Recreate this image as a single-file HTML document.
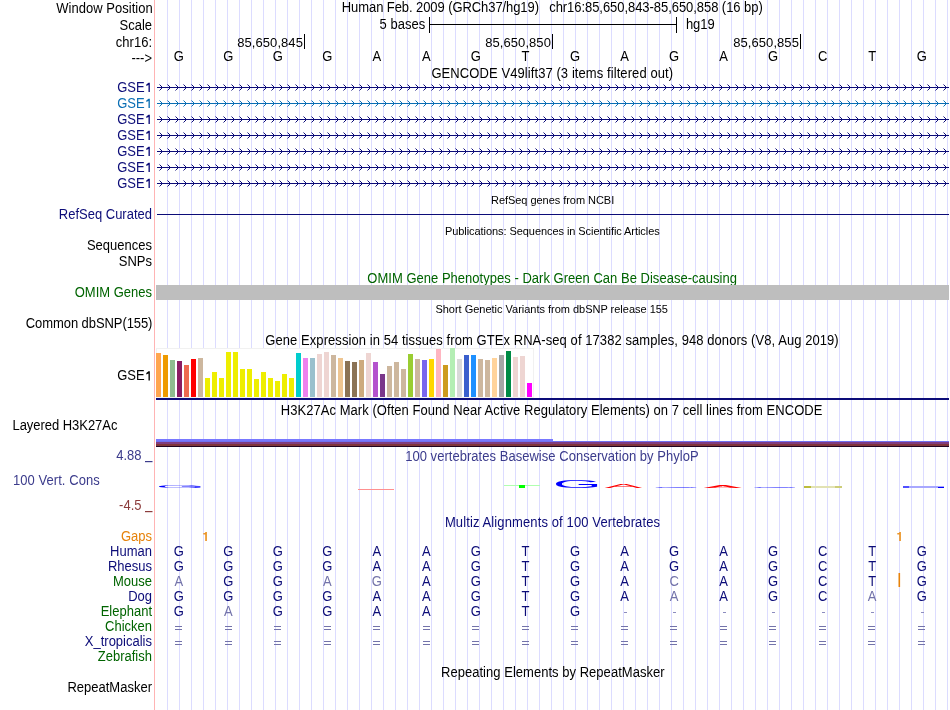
<!DOCTYPE html><html><head><meta charset="utf-8"><style>html,body{margin:0;padding:0;background:#fff;width:950px;height:710px;overflow:hidden}svg{display:block;font-size:13px;will-change:transform}text{font-family:"Liberation Sans",sans-serif}</style></head><body>
<svg width="950" height="710" viewBox="0 0 950 710" shape-rendering="crispEdges">
<path d="M167.5 0V710 M179.5 0V710 M191.5 0V710 M203.5 0V710 M215.5 0V710 M227.5 0V710 M239.5 0V710 M251.5 0V710 M263.5 0V710 M275.5 0V710 M287.5 0V710 M299.5 0V710 M311.5 0V710 M323.5 0V710 M335.5 0V710 M347.5 0V710 M359.5 0V710 M371.5 0V710 M383.5 0V710 M395.5 0V710 M407.5 0V710 M419.5 0V710 M431.5 0V710 M443.5 0V710 M455.5 0V710 M467.5 0V710 M479.5 0V710 M491.5 0V710 M503.5 0V710 M515.5 0V710 M527.5 0V710 M539.5 0V710 M551.5 0V710 M563.5 0V710 M575.5 0V710 M587.5 0V710 M599.5 0V710 M611.5 0V710 M623.5 0V710 M635.5 0V710 M647.5 0V710 M659.5 0V710 M671.5 0V710 M683.5 0V710 M695.5 0V710 M707.5 0V710 M719.5 0V710 M731.5 0V710 M743.5 0V710 M755.5 0V710 M767.5 0V710 M779.5 0V710 M791.5 0V710 M803.5 0V710 M815.5 0V710 M827.5 0V710 M839.5 0V710 M851.5 0V710 M863.5 0V710 M875.5 0V710 M887.5 0V710 M899.5 0V710 M911.5 0V710 M923.5 0V710 M935.5 0V710 M947.5 0V710" stroke="#dcdcff" stroke-width="1"/>
<rect x="154" y="0" width="1" height="710" fill="#ffb4b4"/>
<text x="56.3" y="13" fill="#000" text-anchor="start" font-size="13" textLength="96.39" lengthAdjust="spacing" transform="matrix(1 0 0 1.055 0 -0.715)">Window Position</text>
<text x="152" y="30" fill="#000" text-anchor="end" font-size="13" transform="matrix(1 0 0 1.055 0 -1.650)">Scale</text>
<text x="152" y="47" fill="#000" text-anchor="end" font-size="13" transform="matrix(1 0 0 1.055 0 -2.585)">chr16:</text>
<text x="152" y="63" fill="#000" text-anchor="end" font-size="13" transform="matrix(1 0 0 1.055 0 -3.465)">---&gt;</text>
<text x="341.8" y="12.5" fill="#000" text-anchor="start" font-size="13" textLength="197.21" lengthAdjust="spacing" transform="matrix(1 0 0 1.055 0 -0.687)">Human Feb. 2009 (GRCh37/hg19)</text>
<text x="549.2" y="12.5" fill="#000" text-anchor="start" font-size="13" textLength="213.54" lengthAdjust="spacing" transform="matrix(1 0 0 1.055 0 -0.687)">chr16:85,650,843-85,650,858 (16 bp)</text>
<text x="379.5" y="29" fill="#000" text-anchor="start" font-size="13" textLength="45.73" lengthAdjust="spacing" transform="matrix(1 0 0 1.055 0 -1.595)">5 bases</text>
<text x="685.9" y="29" fill="#000" text-anchor="start" font-size="13" textLength="28.83" lengthAdjust="spacing" transform="matrix(1 0 0 1.055 0 -1.595)">hg19</text>
<path d="M429.5 17V33M676.5 17V33M429 24.5H677" stroke="#000" stroke-width="1" fill="none"/>
<text x="237.3" y="47" fill="#000" text-anchor="start" font-size="13" textLength="65.56" lengthAdjust="spacing">85,650,845</text>
<rect x="304" y="34" width="1" height="15" fill="#000"/>
<text x="485.3" y="47" fill="#000" text-anchor="start" font-size="13" textLength="65.56" lengthAdjust="spacing">85,650,850</text>
<rect x="552" y="34" width="1" height="15" fill="#000"/>
<text x="733.3" y="47" fill="#000" text-anchor="start" font-size="13" textLength="65.56" lengthAdjust="spacing">85,650,855</text>
<rect x="800" y="34" width="1" height="15" fill="#000"/>
<text x="178.8" y="61" fill="#000" text-anchor="middle" font-size="13" transform="matrix(1 0 0 1.055 0 -3.355)">G</text>
<text x="228.3" y="61" fill="#000" text-anchor="middle" font-size="13" transform="matrix(1 0 0 1.055 0 -3.355)">G</text>
<text x="277.8" y="61" fill="#000" text-anchor="middle" font-size="13" transform="matrix(1 0 0 1.055 0 -3.355)">G</text>
<text x="327.4" y="61" fill="#000" text-anchor="middle" font-size="13" transform="matrix(1 0 0 1.055 0 -3.355)">G</text>
<text x="376.9" y="61" fill="#000" text-anchor="middle" font-size="13" transform="matrix(1 0 0 1.055 0 -3.355)">A</text>
<text x="426.4" y="61" fill="#000" text-anchor="middle" font-size="13" transform="matrix(1 0 0 1.055 0 -3.355)">A</text>
<text x="475.9" y="61" fill="#000" text-anchor="middle" font-size="13" transform="matrix(1 0 0 1.055 0 -3.355)">G</text>
<text x="525.5" y="61" fill="#000" text-anchor="middle" font-size="13" transform="matrix(1 0 0 1.055 0 -3.355)">T</text>
<text x="575.0" y="61" fill="#000" text-anchor="middle" font-size="13" transform="matrix(1 0 0 1.055 0 -3.355)">G</text>
<text x="624.5" y="61" fill="#000" text-anchor="middle" font-size="13" transform="matrix(1 0 0 1.055 0 -3.355)">A</text>
<text x="674.1" y="61" fill="#000" text-anchor="middle" font-size="13" transform="matrix(1 0 0 1.055 0 -3.355)">G</text>
<text x="723.6" y="61" fill="#000" text-anchor="middle" font-size="13" transform="matrix(1 0 0 1.055 0 -3.355)">A</text>
<text x="773.1" y="61" fill="#000" text-anchor="middle" font-size="13" transform="matrix(1 0 0 1.055 0 -3.355)">G</text>
<text x="822.7" y="61" fill="#000" text-anchor="middle" font-size="13" transform="matrix(1 0 0 1.055 0 -3.355)">C</text>
<text x="872.2" y="61" fill="#000" text-anchor="middle" font-size="13" transform="matrix(1 0 0 1.055 0 -3.355)">T</text>
<text x="921.7" y="61" fill="#000" text-anchor="middle" font-size="13" transform="matrix(1 0 0 1.055 0 -3.355)">G</text>
<text x="431.4" y="78" fill="#000" text-anchor="start" font-size="13" textLength="241.67" lengthAdjust="spacing" transform="matrix(1 0 0 1.055 0 -4.290)">GENCODE V49lift37 (3 items filtered out)</text>
<text x="144.6" y="92" fill="#0c0c78" text-anchor="end" font-size="13" transform="matrix(1 0 0 1.055 0 -5.060)">GSE</text>
<path d="M148.5 82.7h1.35v9.3h-1.35v-6.9l-2.2 0.8v-1.3z" fill="#0c0c78" shape-rendering="auto"/>
<path d="M157 87.5H949" stroke="#0c0c78" stroke-width="1" fill="none"/>
<path d="M159 84L162 87L159 90 M167 84L170 87L167 90 M175 84L178 87L175 90 M183 84L186 87L183 90 M191 84L194 87L191 90 M199 84L202 87L199 90 M207 84L210 87L207 90 M215 84L218 87L215 90 M223 84L226 87L223 90 M231 84L234 87L231 90 M239 84L242 87L239 90 M247 84L250 87L247 90 M255 84L258 87L255 90 M263 84L266 87L263 90 M271 84L274 87L271 90 M279 84L282 87L279 90 M287 84L290 87L287 90 M295 84L298 87L295 90 M303 84L306 87L303 90 M311 84L314 87L311 90 M319 84L322 87L319 90 M327 84L330 87L327 90 M335 84L338 87L335 90 M343 84L346 87L343 90 M351 84L354 87L351 90 M359 84L362 87L359 90 M367 84L370 87L367 90 M375 84L378 87L375 90 M383 84L386 87L383 90 M391 84L394 87L391 90 M399 84L402 87L399 90 M407 84L410 87L407 90 M415 84L418 87L415 90 M423 84L426 87L423 90 M431 84L434 87L431 90 M439 84L442 87L439 90 M447 84L450 87L447 90 M455 84L458 87L455 90 M463 84L466 87L463 90 M471 84L474 87L471 90 M479 84L482 87L479 90 M487 84L490 87L487 90 M495 84L498 87L495 90 M503 84L506 87L503 90 M511 84L514 87L511 90 M519 84L522 87L519 90 M527 84L530 87L527 90 M535 84L538 87L535 90 M543 84L546 87L543 90 M551 84L554 87L551 90 M559 84L562 87L559 90 M567 84L570 87L567 90 M575 84L578 87L575 90 M583 84L586 87L583 90 M591 84L594 87L591 90 M599 84L602 87L599 90 M607 84L610 87L607 90 M615 84L618 87L615 90 M623 84L626 87L623 90 M631 84L634 87L631 90 M639 84L642 87L639 90 M647 84L650 87L647 90 M655 84L658 87L655 90 M663 84L666 87L663 90 M671 84L674 87L671 90 M679 84L682 87L679 90 M687 84L690 87L687 90 M695 84L698 87L695 90 M703 84L706 87L703 90 M711 84L714 87L711 90 M719 84L722 87L719 90 M727 84L730 87L727 90 M735 84L738 87L735 90 M743 84L746 87L743 90 M751 84L754 87L751 90 M759 84L762 87L759 90 M767 84L770 87L767 90 M775 84L778 87L775 90 M783 84L786 87L783 90 M791 84L794 87L791 90 M799 84L802 87L799 90 M807 84L810 87L807 90 M815 84L818 87L815 90 M823 84L826 87L823 90 M831 84L834 87L831 90 M839 84L842 87L839 90 M847 84L850 87L847 90 M855 84L858 87L855 90 M863 84L866 87L863 90 M871 84L874 87L871 90 M879 84L882 87L879 90 M887 84L890 87L887 90 M895 84L898 87L895 90 M903 84L906 87L903 90 M911 84L914 87L911 90 M919 84L922 87L919 90 M927 84L930 87L927 90 M935 84L938 87L935 90 M943 84L946 87L943 90" stroke="#0c0c78" stroke-width="1" fill="none" transform="translate(0.5,0.5)" shape-rendering="auto"/>
<text x="144.6" y="108" fill="#0a6eb4" text-anchor="end" font-size="13" transform="matrix(1 0 0 1.055 0 -5.940)">GSE</text>
<path d="M148.5 98.7h1.35v9.3h-1.35v-6.9l-2.2 0.8v-1.3z" fill="#0a6eb4" shape-rendering="auto"/>
<path d="M157 103.5H949" stroke="#0a6eb4" stroke-width="1" fill="none"/>
<path d="M159 100L162 103L159 106 M167 100L170 103L167 106 M175 100L178 103L175 106 M183 100L186 103L183 106 M191 100L194 103L191 106 M199 100L202 103L199 106 M207 100L210 103L207 106 M215 100L218 103L215 106 M223 100L226 103L223 106 M231 100L234 103L231 106 M239 100L242 103L239 106 M247 100L250 103L247 106 M255 100L258 103L255 106 M263 100L266 103L263 106 M271 100L274 103L271 106 M279 100L282 103L279 106 M287 100L290 103L287 106 M295 100L298 103L295 106 M303 100L306 103L303 106 M311 100L314 103L311 106 M319 100L322 103L319 106 M327 100L330 103L327 106 M335 100L338 103L335 106 M343 100L346 103L343 106 M351 100L354 103L351 106 M359 100L362 103L359 106 M367 100L370 103L367 106 M375 100L378 103L375 106 M383 100L386 103L383 106 M391 100L394 103L391 106 M399 100L402 103L399 106 M407 100L410 103L407 106 M415 100L418 103L415 106 M423 100L426 103L423 106 M431 100L434 103L431 106 M439 100L442 103L439 106 M447 100L450 103L447 106 M455 100L458 103L455 106 M463 100L466 103L463 106 M471 100L474 103L471 106 M479 100L482 103L479 106 M487 100L490 103L487 106 M495 100L498 103L495 106 M503 100L506 103L503 106 M511 100L514 103L511 106 M519 100L522 103L519 106 M527 100L530 103L527 106 M535 100L538 103L535 106 M543 100L546 103L543 106 M551 100L554 103L551 106 M559 100L562 103L559 106 M567 100L570 103L567 106 M575 100L578 103L575 106 M583 100L586 103L583 106 M591 100L594 103L591 106 M599 100L602 103L599 106 M607 100L610 103L607 106 M615 100L618 103L615 106 M623 100L626 103L623 106 M631 100L634 103L631 106 M639 100L642 103L639 106 M647 100L650 103L647 106 M655 100L658 103L655 106 M663 100L666 103L663 106 M671 100L674 103L671 106 M679 100L682 103L679 106 M687 100L690 103L687 106 M695 100L698 103L695 106 M703 100L706 103L703 106 M711 100L714 103L711 106 M719 100L722 103L719 106 M727 100L730 103L727 106 M735 100L738 103L735 106 M743 100L746 103L743 106 M751 100L754 103L751 106 M759 100L762 103L759 106 M767 100L770 103L767 106 M775 100L778 103L775 106 M783 100L786 103L783 106 M791 100L794 103L791 106 M799 100L802 103L799 106 M807 100L810 103L807 106 M815 100L818 103L815 106 M823 100L826 103L823 106 M831 100L834 103L831 106 M839 100L842 103L839 106 M847 100L850 103L847 106 M855 100L858 103L855 106 M863 100L866 103L863 106 M871 100L874 103L871 106 M879 100L882 103L879 106 M887 100L890 103L887 106 M895 100L898 103L895 106 M903 100L906 103L903 106 M911 100L914 103L911 106 M919 100L922 103L919 106 M927 100L930 103L927 106 M935 100L938 103L935 106 M943 100L946 103L943 106" stroke="#0a6eb4" stroke-width="1" fill="none" transform="translate(0.5,0.5)" shape-rendering="auto"/>
<text x="144.6" y="124" fill="#0c0c78" text-anchor="end" font-size="13" transform="matrix(1 0 0 1.055 0 -6.820)">GSE</text>
<path d="M148.5 114.7h1.35v9.3h-1.35v-6.9l-2.2 0.8v-1.3z" fill="#0c0c78" shape-rendering="auto"/>
<path d="M157 119.5H949" stroke="#0c0c78" stroke-width="1" fill="none"/>
<path d="M159 116L162 119L159 122 M167 116L170 119L167 122 M175 116L178 119L175 122 M183 116L186 119L183 122 M191 116L194 119L191 122 M199 116L202 119L199 122 M207 116L210 119L207 122 M215 116L218 119L215 122 M223 116L226 119L223 122 M231 116L234 119L231 122 M239 116L242 119L239 122 M247 116L250 119L247 122 M255 116L258 119L255 122 M263 116L266 119L263 122 M271 116L274 119L271 122 M279 116L282 119L279 122 M287 116L290 119L287 122 M295 116L298 119L295 122 M303 116L306 119L303 122 M311 116L314 119L311 122 M319 116L322 119L319 122 M327 116L330 119L327 122 M335 116L338 119L335 122 M343 116L346 119L343 122 M351 116L354 119L351 122 M359 116L362 119L359 122 M367 116L370 119L367 122 M375 116L378 119L375 122 M383 116L386 119L383 122 M391 116L394 119L391 122 M399 116L402 119L399 122 M407 116L410 119L407 122 M415 116L418 119L415 122 M423 116L426 119L423 122 M431 116L434 119L431 122 M439 116L442 119L439 122 M447 116L450 119L447 122 M455 116L458 119L455 122 M463 116L466 119L463 122 M471 116L474 119L471 122 M479 116L482 119L479 122 M487 116L490 119L487 122 M495 116L498 119L495 122 M503 116L506 119L503 122 M511 116L514 119L511 122 M519 116L522 119L519 122 M527 116L530 119L527 122 M535 116L538 119L535 122 M543 116L546 119L543 122 M551 116L554 119L551 122 M559 116L562 119L559 122 M567 116L570 119L567 122 M575 116L578 119L575 122 M583 116L586 119L583 122 M591 116L594 119L591 122 M599 116L602 119L599 122 M607 116L610 119L607 122 M615 116L618 119L615 122 M623 116L626 119L623 122 M631 116L634 119L631 122 M639 116L642 119L639 122 M647 116L650 119L647 122 M655 116L658 119L655 122 M663 116L666 119L663 122 M671 116L674 119L671 122 M679 116L682 119L679 122 M687 116L690 119L687 122 M695 116L698 119L695 122 M703 116L706 119L703 122 M711 116L714 119L711 122 M719 116L722 119L719 122 M727 116L730 119L727 122 M735 116L738 119L735 122 M743 116L746 119L743 122 M751 116L754 119L751 122 M759 116L762 119L759 122 M767 116L770 119L767 122 M775 116L778 119L775 122 M783 116L786 119L783 122 M791 116L794 119L791 122 M799 116L802 119L799 122 M807 116L810 119L807 122 M815 116L818 119L815 122 M823 116L826 119L823 122 M831 116L834 119L831 122 M839 116L842 119L839 122 M847 116L850 119L847 122 M855 116L858 119L855 122 M863 116L866 119L863 122 M871 116L874 119L871 122 M879 116L882 119L879 122 M887 116L890 119L887 122 M895 116L898 119L895 122 M903 116L906 119L903 122 M911 116L914 119L911 122 M919 116L922 119L919 122 M927 116L930 119L927 122 M935 116L938 119L935 122 M943 116L946 119L943 122" stroke="#0c0c78" stroke-width="1" fill="none" transform="translate(0.5,0.5)" shape-rendering="auto"/>
<text x="144.6" y="140" fill="#0c0c78" text-anchor="end" font-size="13" transform="matrix(1 0 0 1.055 0 -7.700)">GSE</text>
<path d="M148.5 130.7h1.35v9.3h-1.35v-6.9l-2.2 0.8v-1.3z" fill="#0c0c78" shape-rendering="auto"/>
<path d="M157 135.5H949" stroke="#0c0c78" stroke-width="1" fill="none"/>
<path d="M159 132L162 135L159 138 M167 132L170 135L167 138 M175 132L178 135L175 138 M183 132L186 135L183 138 M191 132L194 135L191 138 M199 132L202 135L199 138 M207 132L210 135L207 138 M215 132L218 135L215 138 M223 132L226 135L223 138 M231 132L234 135L231 138 M239 132L242 135L239 138 M247 132L250 135L247 138 M255 132L258 135L255 138 M263 132L266 135L263 138 M271 132L274 135L271 138 M279 132L282 135L279 138 M287 132L290 135L287 138 M295 132L298 135L295 138 M303 132L306 135L303 138 M311 132L314 135L311 138 M319 132L322 135L319 138 M327 132L330 135L327 138 M335 132L338 135L335 138 M343 132L346 135L343 138 M351 132L354 135L351 138 M359 132L362 135L359 138 M367 132L370 135L367 138 M375 132L378 135L375 138 M383 132L386 135L383 138 M391 132L394 135L391 138 M399 132L402 135L399 138 M407 132L410 135L407 138 M415 132L418 135L415 138 M423 132L426 135L423 138 M431 132L434 135L431 138 M439 132L442 135L439 138 M447 132L450 135L447 138 M455 132L458 135L455 138 M463 132L466 135L463 138 M471 132L474 135L471 138 M479 132L482 135L479 138 M487 132L490 135L487 138 M495 132L498 135L495 138 M503 132L506 135L503 138 M511 132L514 135L511 138 M519 132L522 135L519 138 M527 132L530 135L527 138 M535 132L538 135L535 138 M543 132L546 135L543 138 M551 132L554 135L551 138 M559 132L562 135L559 138 M567 132L570 135L567 138 M575 132L578 135L575 138 M583 132L586 135L583 138 M591 132L594 135L591 138 M599 132L602 135L599 138 M607 132L610 135L607 138 M615 132L618 135L615 138 M623 132L626 135L623 138 M631 132L634 135L631 138 M639 132L642 135L639 138 M647 132L650 135L647 138 M655 132L658 135L655 138 M663 132L666 135L663 138 M671 132L674 135L671 138 M679 132L682 135L679 138 M687 132L690 135L687 138 M695 132L698 135L695 138 M703 132L706 135L703 138 M711 132L714 135L711 138 M719 132L722 135L719 138 M727 132L730 135L727 138 M735 132L738 135L735 138 M743 132L746 135L743 138 M751 132L754 135L751 138 M759 132L762 135L759 138 M767 132L770 135L767 138 M775 132L778 135L775 138 M783 132L786 135L783 138 M791 132L794 135L791 138 M799 132L802 135L799 138 M807 132L810 135L807 138 M815 132L818 135L815 138 M823 132L826 135L823 138 M831 132L834 135L831 138 M839 132L842 135L839 138 M847 132L850 135L847 138 M855 132L858 135L855 138 M863 132L866 135L863 138 M871 132L874 135L871 138 M879 132L882 135L879 138 M887 132L890 135L887 138 M895 132L898 135L895 138 M903 132L906 135L903 138 M911 132L914 135L911 138 M919 132L922 135L919 138 M927 132L930 135L927 138 M935 132L938 135L935 138 M943 132L946 135L943 138" stroke="#0c0c78" stroke-width="1" fill="none" transform="translate(0.5,0.5)" shape-rendering="auto"/>
<text x="144.6" y="156" fill="#0c0c78" text-anchor="end" font-size="13" transform="matrix(1 0 0 1.055 0 -8.580)">GSE</text>
<path d="M148.5 146.7h1.35v9.3h-1.35v-6.9l-2.2 0.8v-1.3z" fill="#0c0c78" shape-rendering="auto"/>
<path d="M157 151.5H949" stroke="#0c0c78" stroke-width="1" fill="none"/>
<path d="M159 148L162 151L159 154 M167 148L170 151L167 154 M175 148L178 151L175 154 M183 148L186 151L183 154 M191 148L194 151L191 154 M199 148L202 151L199 154 M207 148L210 151L207 154 M215 148L218 151L215 154 M223 148L226 151L223 154 M231 148L234 151L231 154 M239 148L242 151L239 154 M247 148L250 151L247 154 M255 148L258 151L255 154 M263 148L266 151L263 154 M271 148L274 151L271 154 M279 148L282 151L279 154 M287 148L290 151L287 154 M295 148L298 151L295 154 M303 148L306 151L303 154 M311 148L314 151L311 154 M319 148L322 151L319 154 M327 148L330 151L327 154 M335 148L338 151L335 154 M343 148L346 151L343 154 M351 148L354 151L351 154 M359 148L362 151L359 154 M367 148L370 151L367 154 M375 148L378 151L375 154 M383 148L386 151L383 154 M391 148L394 151L391 154 M399 148L402 151L399 154 M407 148L410 151L407 154 M415 148L418 151L415 154 M423 148L426 151L423 154 M431 148L434 151L431 154 M439 148L442 151L439 154 M447 148L450 151L447 154 M455 148L458 151L455 154 M463 148L466 151L463 154 M471 148L474 151L471 154 M479 148L482 151L479 154 M487 148L490 151L487 154 M495 148L498 151L495 154 M503 148L506 151L503 154 M511 148L514 151L511 154 M519 148L522 151L519 154 M527 148L530 151L527 154 M535 148L538 151L535 154 M543 148L546 151L543 154 M551 148L554 151L551 154 M559 148L562 151L559 154 M567 148L570 151L567 154 M575 148L578 151L575 154 M583 148L586 151L583 154 M591 148L594 151L591 154 M599 148L602 151L599 154 M607 148L610 151L607 154 M615 148L618 151L615 154 M623 148L626 151L623 154 M631 148L634 151L631 154 M639 148L642 151L639 154 M647 148L650 151L647 154 M655 148L658 151L655 154 M663 148L666 151L663 154 M671 148L674 151L671 154 M679 148L682 151L679 154 M687 148L690 151L687 154 M695 148L698 151L695 154 M703 148L706 151L703 154 M711 148L714 151L711 154 M719 148L722 151L719 154 M727 148L730 151L727 154 M735 148L738 151L735 154 M743 148L746 151L743 154 M751 148L754 151L751 154 M759 148L762 151L759 154 M767 148L770 151L767 154 M775 148L778 151L775 154 M783 148L786 151L783 154 M791 148L794 151L791 154 M799 148L802 151L799 154 M807 148L810 151L807 154 M815 148L818 151L815 154 M823 148L826 151L823 154 M831 148L834 151L831 154 M839 148L842 151L839 154 M847 148L850 151L847 154 M855 148L858 151L855 154 M863 148L866 151L863 154 M871 148L874 151L871 154 M879 148L882 151L879 154 M887 148L890 151L887 154 M895 148L898 151L895 154 M903 148L906 151L903 154 M911 148L914 151L911 154 M919 148L922 151L919 154 M927 148L930 151L927 154 M935 148L938 151L935 154 M943 148L946 151L943 154" stroke="#0c0c78" stroke-width="1" fill="none" transform="translate(0.5,0.5)" shape-rendering="auto"/>
<text x="144.6" y="172" fill="#0c0c78" text-anchor="end" font-size="13" transform="matrix(1 0 0 1.055 0 -9.460)">GSE</text>
<path d="M148.5 162.7h1.35v9.3h-1.35v-6.9l-2.2 0.8v-1.3z" fill="#0c0c78" shape-rendering="auto"/>
<path d="M157 167.5H949" stroke="#0c0c78" stroke-width="1" fill="none"/>
<path d="M159 164L162 167L159 170 M167 164L170 167L167 170 M175 164L178 167L175 170 M183 164L186 167L183 170 M191 164L194 167L191 170 M199 164L202 167L199 170 M207 164L210 167L207 170 M215 164L218 167L215 170 M223 164L226 167L223 170 M231 164L234 167L231 170 M239 164L242 167L239 170 M247 164L250 167L247 170 M255 164L258 167L255 170 M263 164L266 167L263 170 M271 164L274 167L271 170 M279 164L282 167L279 170 M287 164L290 167L287 170 M295 164L298 167L295 170 M303 164L306 167L303 170 M311 164L314 167L311 170 M319 164L322 167L319 170 M327 164L330 167L327 170 M335 164L338 167L335 170 M343 164L346 167L343 170 M351 164L354 167L351 170 M359 164L362 167L359 170 M367 164L370 167L367 170 M375 164L378 167L375 170 M383 164L386 167L383 170 M391 164L394 167L391 170 M399 164L402 167L399 170 M407 164L410 167L407 170 M415 164L418 167L415 170 M423 164L426 167L423 170 M431 164L434 167L431 170 M439 164L442 167L439 170 M447 164L450 167L447 170 M455 164L458 167L455 170 M463 164L466 167L463 170 M471 164L474 167L471 170 M479 164L482 167L479 170 M487 164L490 167L487 170 M495 164L498 167L495 170 M503 164L506 167L503 170 M511 164L514 167L511 170 M519 164L522 167L519 170 M527 164L530 167L527 170 M535 164L538 167L535 170 M543 164L546 167L543 170 M551 164L554 167L551 170 M559 164L562 167L559 170 M567 164L570 167L567 170 M575 164L578 167L575 170 M583 164L586 167L583 170 M591 164L594 167L591 170 M599 164L602 167L599 170 M607 164L610 167L607 170 M615 164L618 167L615 170 M623 164L626 167L623 170 M631 164L634 167L631 170 M639 164L642 167L639 170 M647 164L650 167L647 170 M655 164L658 167L655 170 M663 164L666 167L663 170 M671 164L674 167L671 170 M679 164L682 167L679 170 M687 164L690 167L687 170 M695 164L698 167L695 170 M703 164L706 167L703 170 M711 164L714 167L711 170 M719 164L722 167L719 170 M727 164L730 167L727 170 M735 164L738 167L735 170 M743 164L746 167L743 170 M751 164L754 167L751 170 M759 164L762 167L759 170 M767 164L770 167L767 170 M775 164L778 167L775 170 M783 164L786 167L783 170 M791 164L794 167L791 170 M799 164L802 167L799 170 M807 164L810 167L807 170 M815 164L818 167L815 170 M823 164L826 167L823 170 M831 164L834 167L831 170 M839 164L842 167L839 170 M847 164L850 167L847 170 M855 164L858 167L855 170 M863 164L866 167L863 170 M871 164L874 167L871 170 M879 164L882 167L879 170 M887 164L890 167L887 170 M895 164L898 167L895 170 M903 164L906 167L903 170 M911 164L914 167L911 170 M919 164L922 167L919 170 M927 164L930 167L927 170 M935 164L938 167L935 170 M943 164L946 167L943 170" stroke="#0c0c78" stroke-width="1" fill="none" transform="translate(0.5,0.5)" shape-rendering="auto"/>
<text x="144.6" y="188" fill="#0c0c78" text-anchor="end" font-size="13" transform="matrix(1 0 0 1.055 0 -10.340)">GSE</text>
<path d="M148.5 178.7h1.35v9.3h-1.35v-6.9l-2.2 0.8v-1.3z" fill="#0c0c78" shape-rendering="auto"/>
<path d="M157 183.5H949" stroke="#0c0c78" stroke-width="1" fill="none"/>
<path d="M159 180L162 183L159 186 M167 180L170 183L167 186 M175 180L178 183L175 186 M183 180L186 183L183 186 M191 180L194 183L191 186 M199 180L202 183L199 186 M207 180L210 183L207 186 M215 180L218 183L215 186 M223 180L226 183L223 186 M231 180L234 183L231 186 M239 180L242 183L239 186 M247 180L250 183L247 186 M255 180L258 183L255 186 M263 180L266 183L263 186 M271 180L274 183L271 186 M279 180L282 183L279 186 M287 180L290 183L287 186 M295 180L298 183L295 186 M303 180L306 183L303 186 M311 180L314 183L311 186 M319 180L322 183L319 186 M327 180L330 183L327 186 M335 180L338 183L335 186 M343 180L346 183L343 186 M351 180L354 183L351 186 M359 180L362 183L359 186 M367 180L370 183L367 186 M375 180L378 183L375 186 M383 180L386 183L383 186 M391 180L394 183L391 186 M399 180L402 183L399 186 M407 180L410 183L407 186 M415 180L418 183L415 186 M423 180L426 183L423 186 M431 180L434 183L431 186 M439 180L442 183L439 186 M447 180L450 183L447 186 M455 180L458 183L455 186 M463 180L466 183L463 186 M471 180L474 183L471 186 M479 180L482 183L479 186 M487 180L490 183L487 186 M495 180L498 183L495 186 M503 180L506 183L503 186 M511 180L514 183L511 186 M519 180L522 183L519 186 M527 180L530 183L527 186 M535 180L538 183L535 186 M543 180L546 183L543 186 M551 180L554 183L551 186 M559 180L562 183L559 186 M567 180L570 183L567 186 M575 180L578 183L575 186 M583 180L586 183L583 186 M591 180L594 183L591 186 M599 180L602 183L599 186 M607 180L610 183L607 186 M615 180L618 183L615 186 M623 180L626 183L623 186 M631 180L634 183L631 186 M639 180L642 183L639 186 M647 180L650 183L647 186 M655 180L658 183L655 186 M663 180L666 183L663 186 M671 180L674 183L671 186 M679 180L682 183L679 186 M687 180L690 183L687 186 M695 180L698 183L695 186 M703 180L706 183L703 186 M711 180L714 183L711 186 M719 180L722 183L719 186 M727 180L730 183L727 186 M735 180L738 183L735 186 M743 180L746 183L743 186 M751 180L754 183L751 186 M759 180L762 183L759 186 M767 180L770 183L767 186 M775 180L778 183L775 186 M783 180L786 183L783 186 M791 180L794 183L791 186 M799 180L802 183L799 186 M807 180L810 183L807 186 M815 180L818 183L815 186 M823 180L826 183L823 186 M831 180L834 183L831 186 M839 180L842 183L839 186 M847 180L850 183L847 186 M855 180L858 183L855 186 M863 180L866 183L863 186 M871 180L874 183L871 186 M879 180L882 183L879 186 M887 180L890 183L887 186 M895 180L898 183L895 186 M903 180L906 183L903 186 M911 180L914 183L911 186 M919 180L922 183L919 186 M927 180L930 183L927 186 M935 180L938 183L935 186 M943 180L946 183L943 186" stroke="#0c0c78" stroke-width="1" fill="none" transform="translate(0.5,0.5)" shape-rendering="auto"/>
<text x="491.0" y="204" fill="#000" text-anchor="start" font-size="11" textLength="123.23" lengthAdjust="spacing">RefSeq genes from NCBI</text>
<text x="152" y="219" fill="#0c0c78" text-anchor="end" font-size="13" transform="matrix(1 0 0 1.055 0 -12.045)">RefSeq Curated</text>
<rect x="157" y="214" width="792" height="1" fill="#0c0c78"/>
<text x="444.9" y="235" fill="#000" text-anchor="start" font-size="11" textLength="214.82" lengthAdjust="spacing">Publications: Sequences in Scientific Articles</text>
<text x="152" y="250" fill="#000" text-anchor="end" font-size="13" transform="matrix(1 0 0 1.055 0 -13.750)">Sequences</text>
<text x="152" y="266" fill="#000" text-anchor="end" font-size="13" transform="matrix(1 0 0 1.055 0 -14.630)">SNPs</text>
<text x="367.3" y="283" fill="#006400" text-anchor="start" font-size="13" textLength="369.64" lengthAdjust="spacing" transform="matrix(1 0 0 1.055 0 -15.565)">OMIM Gene Phenotypes - Dark Green Can Be Disease-causing</text>
<text x="152" y="297" fill="#006400" text-anchor="end" font-size="13" transform="matrix(1 0 0 1.055 0 -16.335)">OMIM Genes</text>
<rect x="156" y="285" width="793" height="15" fill="#bebebe"/>
<text x="435.4" y="313" fill="#000" text-anchor="start" font-size="11" textLength="232.57" lengthAdjust="spacing">Short Genetic Variants from dbSNP release 155</text>
<text x="25.8" y="328" fill="#000" text-anchor="start" font-size="13" textLength="126.66" lengthAdjust="spacing" transform="matrix(1 0 0 1.055 0 -18.040)">Common dbSNP(155)</text>
<text x="265.3" y="345" fill="#000" text-anchor="start" font-size="13" textLength="573.42" lengthAdjust="spacing" transform="matrix(1 0 0 1.055 0 -18.975)">Gene Expression in 54 tissues from GTEx RNA-seq of 17382 samples, 948 donors (V8, Aug 2019)</text>
<text x="144.6" y="380.5" fill="#000" text-anchor="end" font-size="13" transform="matrix(1 0 0 1.055 0 -20.927)">GSE</text>
<path d="M148.5 371.2h1.35v9.3h-1.35v-6.9l-2.2 0.8v-1.3z" fill="#000" shape-rendering="auto"/>
<rect x="156.5" y="348.5" width="377" height="49" fill="#fff" stroke="#f1f1f1" stroke-width="1"/>
<rect x="156" y="353" width="5" height="44" fill="#FFA54F"/>
<rect x="163" y="355" width="5" height="42" fill="#EE9A00"/>
<rect x="170" y="360" width="5" height="37" fill="#8FBC8F"/>
<rect x="177" y="361" width="5" height="36" fill="#8B1C62"/>
<rect x="184" y="365" width="5" height="32" fill="#EE6A50"/>
<rect x="191" y="359" width="5" height="38" fill="#FF0000"/>
<rect x="198" y="358" width="5" height="39" fill="#CDB79E"/>
<rect x="205" y="378" width="5" height="19" fill="#EEEE00"/>
<rect x="212" y="372" width="5" height="25" fill="#EEEE00"/>
<rect x="219" y="378" width="5" height="19" fill="#EEEE00"/>
<rect x="226" y="352" width="5" height="45" fill="#EEEE00"/>
<rect x="233" y="352" width="5" height="45" fill="#EEEE00"/>
<rect x="240" y="369" width="5" height="28" fill="#EEEE00"/>
<rect x="247" y="369" width="5" height="28" fill="#EEEE00"/>
<rect x="254" y="379" width="5" height="18" fill="#EEEE00"/>
<rect x="261" y="372" width="5" height="25" fill="#EEEE00"/>
<rect x="268" y="378" width="5" height="19" fill="#EEEE00"/>
<rect x="275" y="381" width="5" height="16" fill="#EEEE00"/>
<rect x="282" y="374" width="5" height="23" fill="#EEEE00"/>
<rect x="289" y="378" width="5" height="19" fill="#EEEE00"/>
<rect x="296" y="353" width="5" height="44" fill="#00CDCD"/>
<rect x="303" y="358" width="5" height="39" fill="#EE82EE"/>
<rect x="310" y="358" width="5" height="39" fill="#9AC0CD"/>
<rect x="317" y="354" width="5" height="43" fill="#EED5D2"/>
<rect x="324" y="352" width="5" height="45" fill="#EED5D2"/>
<rect x="331" y="355" width="5" height="42" fill="#CDB79E"/>
<rect x="338" y="358" width="5" height="39" fill="#EEC591"/>
<rect x="345" y="361" width="5" height="36" fill="#8B7355"/>
<rect x="352" y="362" width="5" height="35" fill="#8B7355"/>
<rect x="359" y="360" width="5" height="37" fill="#CDAA7D"/>
<rect x="366" y="353" width="5" height="44" fill="#EED5D2"/>
<rect x="373" y="362" width="5" height="35" fill="#B452CD"/>
<rect x="380" y="374" width="5" height="23" fill="#7A378B"/>
<rect x="387" y="366" width="5" height="31" fill="#CDB79E"/>
<rect x="394" y="362" width="5" height="35" fill="#CDB79E"/>
<rect x="401" y="369" width="5" height="28" fill="#CDB79E"/>
<rect x="408" y="354" width="5" height="43" fill="#9ACD32"/>
<rect x="415" y="359" width="5" height="38" fill="#CDB79E"/>
<rect x="422" y="360" width="5" height="37" fill="#7A67EE"/>
<rect x="429" y="359" width="5" height="38" fill="#FFD700"/>
<rect x="436" y="349" width="5" height="48" fill="#FFB6C1"/>
<rect x="443" y="365" width="5" height="32" fill="#CD9B1D"/>
<rect x="450" y="348" width="5" height="49" fill="#B4EEB4"/>
<rect x="457" y="359" width="5" height="38" fill="#D9D9D9"/>
<rect x="464" y="355" width="5" height="42" fill="#3A5FCD"/>
<rect x="471" y="355" width="5" height="42" fill="#1E90FF"/>
<rect x="478" y="359" width="5" height="38" fill="#CDB79E"/>
<rect x="485" y="360" width="5" height="37" fill="#CDB79E"/>
<rect x="492" y="358" width="5" height="39" fill="#FFD39B"/>
<rect x="499" y="355" width="5" height="42" fill="#A6A6A6"/>
<rect x="506" y="351" width="5" height="46" fill="#008B45"/>
<rect x="513" y="357" width="5" height="40" fill="#EED5D2"/>
<rect x="520" y="356" width="5" height="41" fill="#EED5D2"/>
<rect x="527" y="383" width="5" height="14" fill="#FF00FF"/>
<rect x="156" y="398" width="793" height="2" fill="#0c0c78"/>
<text x="280.8" y="415" fill="#000" text-anchor="start" font-size="13" textLength="541.63" lengthAdjust="spacing" transform="matrix(1 0 0 1.055 0 -22.825)">H3K27Ac Mark (Often Found Near Active Regulatory Elements) on 7 cell lines from ENCODE</text>
<text x="12.5" y="429.7" fill="#000" text-anchor="start" font-size="13" textLength="104.9" lengthAdjust="spacing" transform="matrix(1 0 0 1.055 0 -23.633)">Layered H3K27Ac</text>
<rect x="156" y="439" width="397" height="2" fill="#7878ff"/>
<rect x="156" y="441" width="793" height="1" fill="#7070f0"/>
<rect x="156" y="442" width="793" height="2" fill="#803c80"/>
<rect x="156" y="444" width="793" height="2" fill="#80343c"/>
<rect x="156" y="446" width="793" height="1" fill="#200420"/>
<text x="141.5" y="460.4" fill="#3c3c8c" text-anchor="end" font-size="13" transform="matrix(1 0 0 1.055 0 -25.322)">4.88</text>
<rect x="145" y="461" width="7.5" height="1.2" fill="#3c3c8c" shape-rendering="auto"/>
<text x="405.2" y="461" fill="#3c3c8c" text-anchor="start" font-size="13" textLength="293.48" lengthAdjust="spacing" transform="matrix(1 0 0 1.055 0 -25.355)">100 vertebrates Basewise Conservation by PhyloP</text>
<text x="12.9" y="485.2" fill="#3c3c8c" text-anchor="start" font-size="13" textLength="86.89" lengthAdjust="spacing" transform="matrix(1 0 0 1.055 0 -26.686)">100 Vert. Cons</text>
<text x="141.5" y="510.3" fill="#8c3c3c" text-anchor="end" font-size="13" transform="matrix(1 0 0 1.055 0 -28.066)">-4.5</text>
<rect x="145" y="511" width="7.5" height="1.2" fill="#8c3c3c" shape-rendering="auto"/>
<text font-size="2048" transform="matrix(0.03119 0 0 0.00207 155.59 488.26)" fill="#0000ff" style="shape-rendering:auto">G</text>
<rect x="358" y="489" width="36" height="1" fill="#ff9090"/>
<text font-size="2048" transform="matrix(0.03082 0 0 0.00566 552.63 487.89)" fill="#0000ff" style="shape-rendering:auto">G</text>
<text font-size="2048" transform="matrix(0.02769 0 0 0.00284 604.59 487.80)" fill="#ff0000" style="shape-rendering:auto">A</text>
<text font-size="2048" transform="matrix(0.03037 0 0 0.00097 652.47 487.98)" fill="#0000ff" style="shape-rendering:auto">G</text>
<text font-size="2048" transform="matrix(0.02806 0 0 0.00206 703.49 487.80)" fill="#ff0000" style="shape-rendering:auto">A</text>
<text font-size="2048" transform="matrix(0.03037 0 0 0.00097 751.27 487.98)" fill="#0000ff" style="shape-rendering:auto">G</text>
<rect x="804" y="486" width="38" height="2" fill="#e2e2b4"/>
<rect x="804" y="486" width="7" height="2" fill="#bcbc3c"/>
<rect x="835" y="486" width="7" height="2" fill="#cdcd78"/>
<rect x="903" y="486" width="41" height="2" fill="#a8a8ff"/>
<rect x="903" y="486" width="6" height="2" fill="#5050ff"/>
<rect x="938" y="487" width="6" height="1" fill="#0000ff"/>
<rect x="504" y="485" width="36" height="1" fill="#b0ffb0"/>
<rect x="519" y="485" width="6" height="3" fill="#00ff00"/>
<text x="444.9" y="527" fill="#0c0c78" text-anchor="start" font-size="13" textLength="215.11" lengthAdjust="spacing" transform="matrix(1 0 0 1.055 0 -28.985)">Multiz Alignments of 100 Vertebrates</text>
<text x="152" y="541.4" fill="#e6820a" text-anchor="end" font-size="13" transform="matrix(1 0 0 1.055 0 -29.777)">Gaps</text>
<text x="152" y="556.4" fill="#0c0c78" text-anchor="end" font-size="13" transform="matrix(1 0 0 1.055 0 -30.602)">Human</text>
<text x="152" y="571.4" fill="#0c0c78" text-anchor="end" font-size="13" transform="matrix(1 0 0 1.055 0 -31.427)">Rhesus</text>
<text x="152" y="586.4" fill="#006400" text-anchor="end" font-size="13" transform="matrix(1 0 0 1.055 0 -32.252)">Mouse</text>
<text x="152" y="601.4" fill="#0c0c78" text-anchor="end" font-size="13" transform="matrix(1 0 0 1.055 0 -33.077)">Dog</text>
<text x="152" y="616.4" fill="#006400" text-anchor="end" font-size="13" transform="matrix(1 0 0 1.055 0 -33.902)">Elephant</text>
<text x="152" y="631.4" fill="#006400" text-anchor="end" font-size="13" transform="matrix(1 0 0 1.055 0 -34.727)">Chicken</text>
<text x="152" y="646.4" fill="#0c0c78" text-anchor="end" font-size="13" transform="matrix(1 0 0 1.055 0 -35.552)">X_tropicalis</text>
<text x="152" y="661.4" fill="#006400" text-anchor="end" font-size="13" transform="matrix(1 0 0 1.055 0 -36.377)">Zebrafish</text>
<text x="178.8" y="555.6" fill="#0c0c78" text-anchor="middle" font-size="13" transform="matrix(1 0 0 1.055 0 -30.558)">G</text>
<text x="228.3" y="555.6" fill="#0c0c78" text-anchor="middle" font-size="13" transform="matrix(1 0 0 1.055 0 -30.558)">G</text>
<text x="277.8" y="555.6" fill="#0c0c78" text-anchor="middle" font-size="13" transform="matrix(1 0 0 1.055 0 -30.558)">G</text>
<text x="327.4" y="555.6" fill="#0c0c78" text-anchor="middle" font-size="13" transform="matrix(1 0 0 1.055 0 -30.558)">G</text>
<text x="376.9" y="555.6" fill="#0c0c78" text-anchor="middle" font-size="13" transform="matrix(1 0 0 1.055 0 -30.558)">A</text>
<text x="426.4" y="555.6" fill="#0c0c78" text-anchor="middle" font-size="13" transform="matrix(1 0 0 1.055 0 -30.558)">A</text>
<text x="475.9" y="555.6" fill="#0c0c78" text-anchor="middle" font-size="13" transform="matrix(1 0 0 1.055 0 -30.558)">G</text>
<text x="525.5" y="555.6" fill="#0c0c78" text-anchor="middle" font-size="13" transform="matrix(1 0 0 1.055 0 -30.558)">T</text>
<text x="575.0" y="555.6" fill="#0c0c78" text-anchor="middle" font-size="13" transform="matrix(1 0 0 1.055 0 -30.558)">G</text>
<text x="624.5" y="555.6" fill="#0c0c78" text-anchor="middle" font-size="13" transform="matrix(1 0 0 1.055 0 -30.558)">A</text>
<text x="674.1" y="555.6" fill="#0c0c78" text-anchor="middle" font-size="13" transform="matrix(1 0 0 1.055 0 -30.558)">G</text>
<text x="723.6" y="555.6" fill="#0c0c78" text-anchor="middle" font-size="13" transform="matrix(1 0 0 1.055 0 -30.558)">A</text>
<text x="773.1" y="555.6" fill="#0c0c78" text-anchor="middle" font-size="13" transform="matrix(1 0 0 1.055 0 -30.558)">G</text>
<text x="822.7" y="555.6" fill="#0c0c78" text-anchor="middle" font-size="13" transform="matrix(1 0 0 1.055 0 -30.558)">C</text>
<text x="872.2" y="555.6" fill="#0c0c78" text-anchor="middle" font-size="13" transform="matrix(1 0 0 1.055 0 -30.558)">T</text>
<text x="921.7" y="555.6" fill="#0c0c78" text-anchor="middle" font-size="13" transform="matrix(1 0 0 1.055 0 -30.558)">G</text>
<text x="178.8" y="570.6" fill="#0c0c78" text-anchor="middle" font-size="13" transform="matrix(1 0 0 1.055 0 -31.383)">G</text>
<text x="228.3" y="570.6" fill="#0c0c78" text-anchor="middle" font-size="13" transform="matrix(1 0 0 1.055 0 -31.383)">G</text>
<text x="277.8" y="570.6" fill="#0c0c78" text-anchor="middle" font-size="13" transform="matrix(1 0 0 1.055 0 -31.383)">G</text>
<text x="327.4" y="570.6" fill="#0c0c78" text-anchor="middle" font-size="13" transform="matrix(1 0 0 1.055 0 -31.383)">G</text>
<text x="376.9" y="570.6" fill="#0c0c78" text-anchor="middle" font-size="13" transform="matrix(1 0 0 1.055 0 -31.383)">A</text>
<text x="426.4" y="570.6" fill="#0c0c78" text-anchor="middle" font-size="13" transform="matrix(1 0 0 1.055 0 -31.383)">A</text>
<text x="475.9" y="570.6" fill="#0c0c78" text-anchor="middle" font-size="13" transform="matrix(1 0 0 1.055 0 -31.383)">G</text>
<text x="525.5" y="570.6" fill="#0c0c78" text-anchor="middle" font-size="13" transform="matrix(1 0 0 1.055 0 -31.383)">T</text>
<text x="575.0" y="570.6" fill="#0c0c78" text-anchor="middle" font-size="13" transform="matrix(1 0 0 1.055 0 -31.383)">G</text>
<text x="624.5" y="570.6" fill="#0c0c78" text-anchor="middle" font-size="13" transform="matrix(1 0 0 1.055 0 -31.383)">A</text>
<text x="674.1" y="570.6" fill="#0c0c78" text-anchor="middle" font-size="13" transform="matrix(1 0 0 1.055 0 -31.383)">G</text>
<text x="723.6" y="570.6" fill="#0c0c78" text-anchor="middle" font-size="13" transform="matrix(1 0 0 1.055 0 -31.383)">A</text>
<text x="773.1" y="570.6" fill="#0c0c78" text-anchor="middle" font-size="13" transform="matrix(1 0 0 1.055 0 -31.383)">G</text>
<text x="822.7" y="570.6" fill="#0c0c78" text-anchor="middle" font-size="13" transform="matrix(1 0 0 1.055 0 -31.383)">C</text>
<text x="872.2" y="570.6" fill="#0c0c78" text-anchor="middle" font-size="13" transform="matrix(1 0 0 1.055 0 -31.383)">T</text>
<text x="921.7" y="570.6" fill="#0c0c78" text-anchor="middle" font-size="13" transform="matrix(1 0 0 1.055 0 -31.383)">G</text>
<text x="178.8" y="585.6" fill="#7373aa" text-anchor="middle" font-size="13" transform="matrix(1 0 0 1.055 0 -32.208)">A</text>
<text x="228.3" y="585.6" fill="#0c0c78" text-anchor="middle" font-size="13" transform="matrix(1 0 0 1.055 0 -32.208)">G</text>
<text x="277.8" y="585.6" fill="#0c0c78" text-anchor="middle" font-size="13" transform="matrix(1 0 0 1.055 0 -32.208)">G</text>
<text x="327.4" y="585.6" fill="#7373aa" text-anchor="middle" font-size="13" transform="matrix(1 0 0 1.055 0 -32.208)">A</text>
<text x="376.9" y="585.6" fill="#7373aa" text-anchor="middle" font-size="13" transform="matrix(1 0 0 1.055 0 -32.208)">G</text>
<text x="426.4" y="585.6" fill="#0c0c78" text-anchor="middle" font-size="13" transform="matrix(1 0 0 1.055 0 -32.208)">A</text>
<text x="475.9" y="585.6" fill="#0c0c78" text-anchor="middle" font-size="13" transform="matrix(1 0 0 1.055 0 -32.208)">G</text>
<text x="525.5" y="585.6" fill="#0c0c78" text-anchor="middle" font-size="13" transform="matrix(1 0 0 1.055 0 -32.208)">T</text>
<text x="575.0" y="585.6" fill="#0c0c78" text-anchor="middle" font-size="13" transform="matrix(1 0 0 1.055 0 -32.208)">G</text>
<text x="624.5" y="585.6" fill="#0c0c78" text-anchor="middle" font-size="13" transform="matrix(1 0 0 1.055 0 -32.208)">A</text>
<text x="674.1" y="585.6" fill="#7373aa" text-anchor="middle" font-size="13" transform="matrix(1 0 0 1.055 0 -32.208)">C</text>
<text x="723.6" y="585.6" fill="#0c0c78" text-anchor="middle" font-size="13" transform="matrix(1 0 0 1.055 0 -32.208)">A</text>
<text x="773.1" y="585.6" fill="#0c0c78" text-anchor="middle" font-size="13" transform="matrix(1 0 0 1.055 0 -32.208)">G</text>
<text x="822.7" y="585.6" fill="#0c0c78" text-anchor="middle" font-size="13" transform="matrix(1 0 0 1.055 0 -32.208)">C</text>
<text x="872.2" y="585.6" fill="#0c0c78" text-anchor="middle" font-size="13" transform="matrix(1 0 0 1.055 0 -32.208)">T</text>
<text x="921.7" y="585.6" fill="#0c0c78" text-anchor="middle" font-size="13" transform="matrix(1 0 0 1.055 0 -32.208)">G</text>
<text x="178.8" y="600.6" fill="#0c0c78" text-anchor="middle" font-size="13" transform="matrix(1 0 0 1.055 0 -33.033)">G</text>
<text x="228.3" y="600.6" fill="#0c0c78" text-anchor="middle" font-size="13" transform="matrix(1 0 0 1.055 0 -33.033)">G</text>
<text x="277.8" y="600.6" fill="#0c0c78" text-anchor="middle" font-size="13" transform="matrix(1 0 0 1.055 0 -33.033)">G</text>
<text x="327.4" y="600.6" fill="#0c0c78" text-anchor="middle" font-size="13" transform="matrix(1 0 0 1.055 0 -33.033)">G</text>
<text x="376.9" y="600.6" fill="#0c0c78" text-anchor="middle" font-size="13" transform="matrix(1 0 0 1.055 0 -33.033)">A</text>
<text x="426.4" y="600.6" fill="#0c0c78" text-anchor="middle" font-size="13" transform="matrix(1 0 0 1.055 0 -33.033)">A</text>
<text x="475.9" y="600.6" fill="#0c0c78" text-anchor="middle" font-size="13" transform="matrix(1 0 0 1.055 0 -33.033)">G</text>
<text x="525.5" y="600.6" fill="#0c0c78" text-anchor="middle" font-size="13" transform="matrix(1 0 0 1.055 0 -33.033)">T</text>
<text x="575.0" y="600.6" fill="#0c0c78" text-anchor="middle" font-size="13" transform="matrix(1 0 0 1.055 0 -33.033)">G</text>
<text x="624.5" y="600.6" fill="#0c0c78" text-anchor="middle" font-size="13" transform="matrix(1 0 0 1.055 0 -33.033)">A</text>
<text x="674.1" y="600.6" fill="#7373aa" text-anchor="middle" font-size="13" transform="matrix(1 0 0 1.055 0 -33.033)">A</text>
<text x="723.6" y="600.6" fill="#0c0c78" text-anchor="middle" font-size="13" transform="matrix(1 0 0 1.055 0 -33.033)">A</text>
<text x="773.1" y="600.6" fill="#0c0c78" text-anchor="middle" font-size="13" transform="matrix(1 0 0 1.055 0 -33.033)">G</text>
<text x="822.7" y="600.6" fill="#0c0c78" text-anchor="middle" font-size="13" transform="matrix(1 0 0 1.055 0 -33.033)">C</text>
<text x="872.2" y="600.6" fill="#7373aa" text-anchor="middle" font-size="13" transform="matrix(1 0 0 1.055 0 -33.033)">A</text>
<text x="921.7" y="600.6" fill="#0c0c78" text-anchor="middle" font-size="13" transform="matrix(1 0 0 1.055 0 -33.033)">G</text>
<text x="178.8" y="615.6" fill="#0c0c78" text-anchor="middle" font-size="13" transform="matrix(1 0 0 1.055 0 -33.858)">G</text>
<text x="228.3" y="615.6" fill="#7373aa" text-anchor="middle" font-size="13" transform="matrix(1 0 0 1.055 0 -33.858)">A</text>
<text x="277.8" y="615.6" fill="#0c0c78" text-anchor="middle" font-size="13" transform="matrix(1 0 0 1.055 0 -33.858)">G</text>
<text x="327.4" y="615.6" fill="#0c0c78" text-anchor="middle" font-size="13" transform="matrix(1 0 0 1.055 0 -33.858)">G</text>
<text x="376.9" y="615.6" fill="#0c0c78" text-anchor="middle" font-size="13" transform="matrix(1 0 0 1.055 0 -33.858)">A</text>
<text x="426.4" y="615.6" fill="#0c0c78" text-anchor="middle" font-size="13" transform="matrix(1 0 0 1.055 0 -33.858)">A</text>
<text x="475.9" y="615.6" fill="#0c0c78" text-anchor="middle" font-size="13" transform="matrix(1 0 0 1.055 0 -33.858)">G</text>
<text x="525.5" y="615.6" fill="#0c0c78" text-anchor="middle" font-size="13" transform="matrix(1 0 0 1.055 0 -33.858)">T</text>
<text x="575.0" y="615.6" fill="#0c0c78" text-anchor="middle" font-size="13" transform="matrix(1 0 0 1.055 0 -33.858)">G</text>
<rect x="624" y="612" width="3" height="1" fill="#8c8cbe"/>
<rect x="673" y="612" width="3" height="1" fill="#8c8cbe"/>
<rect x="723" y="612" width="3" height="1" fill="#8c8cbe"/>
<rect x="772" y="612" width="3" height="1" fill="#8c8cbe"/>
<rect x="822" y="612" width="3" height="1" fill="#8c8cbe"/>
<rect x="871" y="612" width="3" height="1" fill="#8c8cbe"/>
<rect x="921" y="612" width="3" height="1" fill="#8c8cbe"/>
<path d="M175 626h7v1h-7zM175 629h7v1h-7zM225 626h7v1h-7zM225 629h7v1h-7zM274 626h7v1h-7zM274 629h7v1h-7zM324 626h7v1h-7zM324 629h7v1h-7zM373 626h7v1h-7zM373 629h7v1h-7zM423 626h7v1h-7zM423 629h7v1h-7zM472 626h7v1h-7zM472 629h7v1h-7zM522 626h7v1h-7zM522 629h7v1h-7zM571 626h7v1h-7zM571 629h7v1h-7zM621 626h7v1h-7zM621 629h7v1h-7zM670 626h7v1h-7zM670 629h7v1h-7zM720 626h7v1h-7zM720 629h7v1h-7zM769 626h7v1h-7zM769 629h7v1h-7zM819 626h7v1h-7zM819 629h7v1h-7zM868 626h7v1h-7zM868 629h7v1h-7zM918 626h7v1h-7zM918 629h7v1h-7zM175 641h7v1h-7zM175 644h7v1h-7zM225 641h7v1h-7zM225 644h7v1h-7zM274 641h7v1h-7zM274 644h7v1h-7zM324 641h7v1h-7zM324 644h7v1h-7zM373 641h7v1h-7zM373 644h7v1h-7zM423 641h7v1h-7zM423 644h7v1h-7zM472 641h7v1h-7zM472 644h7v1h-7zM522 641h7v1h-7zM522 644h7v1h-7zM571 641h7v1h-7zM571 644h7v1h-7zM621 641h7v1h-7zM621 644h7v1h-7zM670 641h7v1h-7zM670 644h7v1h-7zM720 641h7v1h-7zM720 644h7v1h-7zM769 641h7v1h-7zM769 644h7v1h-7zM819 641h7v1h-7zM819 644h7v1h-7zM868 641h7v1h-7zM868 644h7v1h-7zM918 641h7v1h-7zM918 644h7v1h-7z" fill="#7373aa"/>
<path d="M205.2 532h1.7v9h-1.7zM203.3 533h2v1.4h-2z" fill="#eb9628" shape-rendering="auto"/>
<path d="M899.2 532h1.7v9h-1.7zM897.3 533h2v1.4h-2z" fill="#eb9628" shape-rendering="auto"/>
<rect x="898.5" y="573" width="1.6" height="14" fill="#e6820a" shape-rendering="auto"/>
<text x="441.0" y="677" fill="#000" text-anchor="start" font-size="13" textLength="223.57" lengthAdjust="spacing" transform="matrix(1 0 0 1.055 0 -37.235)">Repeating Elements by RepeatMasker</text>
<text x="152" y="691.6" fill="#000" text-anchor="end" font-size="13" transform="matrix(1 0 0 1.055 0 -38.038)">RepeatMasker</text>
</svg></body></html>
